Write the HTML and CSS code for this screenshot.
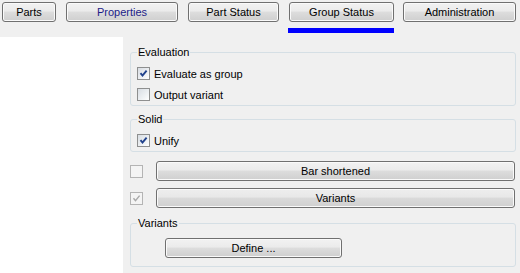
FILE: index.html
```html
<!DOCTYPE html>
<html lang="en">
<head>
    <meta charset="UTF-8">
    <title>Group Status</title>
    <link rel="stylesheet" href="styles.css">
</head>
<body>
    <div class="tabs">
        <div class="tab tab-parts"><button class="btn">Parts</button></div>
        <div class="tab tab-properties"><button class="btn hot">Properties</button></div>
        <div class="tab tab-part-status"><button class="btn">Part Status</button></div>
        <div class="tab tab-group-status active">
            <button class="btn">Group Status</button>
            <div class="tab-marker"></div>
        </div>
        <div class="tab tab-admin"><button class="btn">Administration</button></div>
    </div>

    <div class="main">
        <div class="sidebar"></div>

        <div class="content">
            <fieldset class="group">
                <legend>Evaluation</legend>
                <label class="check-row">
                    <span class="checkbox">
                        <svg viewBox="0 0 11 11" width="11" height="11"><path d="M2.5 5.2 L4.5 7.6 L8.6 2.6" fill="none" stroke="#21428c" stroke-width="1.9"/></svg>
                    </span>
                    Evaluate as group
                </label>
                <label class="check-row">
                    <span class="checkbox"></span>
                    Output variant
                </label>
            </fieldset>

            <fieldset class="group group-solid">
                <legend>Solid</legend>
                <label class="check-row">
                    <span class="checkbox">
                        <svg viewBox="0 0 11 11" width="11" height="11"><path d="M2.5 5.2 L4.5 7.6 L8.6 2.6" fill="none" stroke="#21428c" stroke-width="1.9"/></svg>
                    </span>
                    Unify
                </label>
            </fieldset>

            <div class="action-row first">
                <span class="checkbox disabled"></span>
                <button class="btn wide">Bar shortened</button>
            </div>
            <div class="action-row">
                <span class="checkbox disabled">
                    <svg viewBox="0 0 11 11" width="11" height="11"><path d="M2.5 5.2 L4.5 7.6 L8.6 2.6" fill="none" stroke="#a8a8a8" stroke-width="1.4"/></svg>
                </span>
                <button class="btn wide pulse">Variants</button>
            </div>

            <fieldset class="group group-variants">
                <legend>Variants</legend>
                <button class="btn define">Define ...</button>
            </fieldset>
        </div>
    </div>
</body>
</html>
```

FILE: styles.css
```css
body {
    margin: 0;
    padding: 0;
    overflow: hidden;
    background-color: #f0f0f0;
    font-family: "Liberation Sans", Arial, sans-serif;
    font-size: 11px;
    color: #000;
}

/* tab strip */
.tabs {
    display: flex;
    height: 37px;
    box-sizing: border-box;
    padding: 2px 0 0 2px;
}
.tab {
    display: flex;
    flex-direction: column;
}
.tab .btn {
    height: 20px;
    width: 100%;
}
.tab-parts { width: 54px; }
.tab-properties { width: 112px; margin-left: 10px; }
.tab-part-status { width: 91px; margin-left: 10px; }
.tab-group-status { width: 105px; margin-left: 10px; }
.tab-admin { width: 113px; margin-left: 9px; }
.tab-marker {
    height: 5px;
    margin: 6px 0 0 -1px;
    width: 106px;
    background-color: #0000ff;
}

/* buttons */
.btn {
    box-sizing: border-box;
    padding: 0;
    font-family: inherit;
    font-size: 11px;
    color: #000;
    border: 1px solid #707070;
    border-radius: 3px;
    background: linear-gradient(#f2f2f2 0%, #ebebeb 45%, #dddddd 50%, #cfcfcf 100%);
    box-shadow: inset 0 0 0 1px #fafafa;
}
.btn.hot {
    color: #1c1c88;
}
.btn.pulse {
    background: linear-gradient(#eeeeee 0%, #e8e8e8 45%, #dadada 50%, #d0d0d0 100%);
}

/* layout */
.main {
    display: flex;
    height: 236px;
}
.sidebar {
    width: 123px;
    background-color: #fff;
}
.content {
    flex: 1;
    display: flex;
    flex-direction: column;
    padding: 9px 4px 0 7px;
}

/* group boxes */
.group {
    margin: 0;
    padding: 4px 6px 0 6px;
    border: 1px solid #d5dfe5;
    border-radius: 3px;
    min-width: 0;
}
.group legend {
    padding: 0 1px;
    line-height: 13px;
}
.group-solid {
    margin-top: 7px;
}
.group-variants {
    margin-top: 9px;
    padding-bottom: 8px;
}

.check-row {
    display: flex;
    align-items: center;
    height: 21px;
    gap: 4px;
}

.checkbox {
    box-sizing: border-box;
    width: 13px;
    height: 13px;
    border: 1px solid #8e8f8f;
    background: linear-gradient(135deg, #d8dde3 0%, #f2f4f6 70%, #ffffff 100%);
    display: flex;
    align-items: center;
    justify-content: center;
    flex: none;
}
.checkbox.disabled {
    border-color: #b4b4b4;
    background: #f4f4f4;
}

/* standalone checkbox + button rows */
.action-row {
    display: flex;
    align-items: center;
    height: 20px;
    margin-top: 7px;
}
.action-row.first {
    margin-top: 9px;
}
.btn.wide {
    width: 359px;
    height: 20px;
    margin-left: 13px;
}
.btn.define {
    display: block;
    width: 177px;
    height: 20px;
    margin: 4px 0 0 28px;
}
```
